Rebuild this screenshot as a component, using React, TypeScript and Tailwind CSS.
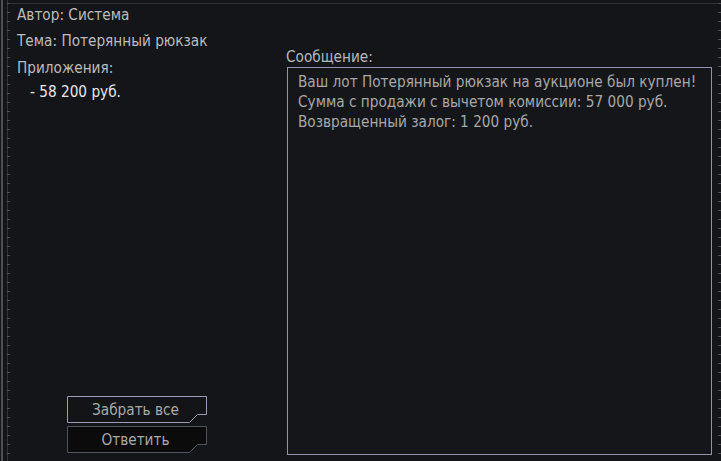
import React from "react";

const font = { fontFamily: '"DejaVu Sans Condensed", "DejaVu Sans", sans-serif' };

function FrameRuler() {
	const ticks = [];
	for (let y = 3; y < 461; y += 9) ticks.push(y);
	return (
		<svg className="absolute inset-0 pointer-events-none" width={721} height={461}>
			<rect x={1} y={0} width={2} height={461} fill="#4e5257" />
			<rect x={7} y={0} width={1} height={461} fill="#33363b" />
			<rect x={7} y={3} width={711} height={1} fill="#303236" />
			{ticks.map(y => (
				<g key={y}>
					<rect x={7} y={y} width={3} height={1} fill="#4a4d53" />
					<rect x={718} y={y} width={3} height={1} fill="#4a4d53" />
				</g>
			))}
		</svg>
	);
}

function NotchButton({ label, light }: { label: string; light?: boolean }) {
	return (
		<div className="relative w-[140px] h-[27px] flex items-center justify-center">
			<svg className="absolute inset-0" width={140} height={27}>
				<path
					d="M0.5 0.5 H139.5 V18.5 H130.5 L122.5 26.5 H0.5 Z"
					fill={light ? "#131417" : "#0b0b0c"}
					stroke={light ? "#9b9cb8" : "#51545e"}
				/>
			</svg>
			<span className="relative text-[15.2px] leading-[20px] text-[#a9a9a9] -ml-[3px]">{label}</span>
		</div>
	);
}

export default function App() {
	return (
		<div
			className="relative w-[721px] h-[461px] bg-[#141518] overflow-hidden flex"
			style={font}
		>
			<FrameRuler />

			{/* Left column */}
			<div className="w-[286px] flex flex-col pl-[17px] pt-[5px] pb-[8px]">
				<div className="text-[15.2px] leading-[20px] text-[#bcbcbc]">Автор: Система</div>
				<div className="mt-[6px] text-[15.2px] leading-[20px] text-[#bcbcbc]">Тема: Потерянный рюкзак</div>
				<div className="mt-[7px] text-[15.2px] leading-[20px] text-[#bcbcbc]">Приложения:</div>
				<div className="mt-[4px] pl-[13px] text-[15.2px] leading-[20px] text-[#e8e8e8]">- 58 200 руб.</div>

				<div className="mt-auto ml-[50px] flex flex-col gap-[3px]">
					<NotchButton label="Забрать все" light />
					<NotchButton label="Ответить" />
				</div>
			</div>

			{/* Right column */}
			<div className="flex flex-col pt-[47px] pb-[6px]">
				<div className="text-[15.2px] leading-[20px] text-[#b8b8b8]">Сообщение:</div>
				<div className="ml-[1px] w-[425px] flex-1 border border-[#9294ae] bg-[#151619] pl-[10px] pt-[4px]">
					<div className="text-[15.2px] leading-[20px] text-[#a8a8a8]">
						<div>Ваш лот Потерянный рюкзак на аукционе был куплен!</div>
						<div>Сумма с продажи с вычетом комиссии: 57 000 руб.</div>
						<div>Возвращенный залог: 1 200 руб.</div>
					</div>
				</div>
			</div>
		</div>
	);
}
